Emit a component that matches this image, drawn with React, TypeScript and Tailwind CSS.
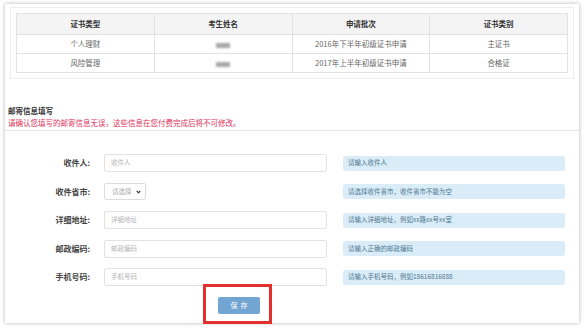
import React from 'react'

const font = { fontFamily: '"Noto Sans CJK SC", "Noto Sans", sans-serif' }

const certs = [
  { type: '个人理财', batch: '2016年下半年初级证书申请', kind: '主证书' },
  { type: '风险管理', batch: '2017年上半年初级证书申请', kind: '合格证' },
]

const fields = [
  { label: '收件人:', placeholder: '收件人', hint: '请输入收件人' },
  { label: '收件省市:', select: true, hint: '请选择收件省市，收件省市不能为空' },
  { label: '详细地址:', placeholder: '详细地址', hint: '请输入详细地址，例如xx路xx号xx室' },
  { label: '邮政编码:', placeholder: '邮政编码', hint: '请输入正确的邮政编码' },
  { label: '手机号码:', placeholder: '手机号码', hint: '请输入手机号码，例如18616816888' },
]

export default function App() {
  return (
    <div className="w-[583px] h-[334px] bg-white pt-[4px] pl-[5px] overflow-hidden" style={font}>
      <div className="w-[574px] h-[319px] bg-white shadow-[0_0_4px_rgba(0,0,0,0.3)]">
        {/* 证书列表 */}
        <div className="mx-[5px] pt-[3px]">
          <div className="border border-[#ececec] p-[5px]">
            <table className="w-full table-fixed border-collapse text-[7.5px] text-center">
              <thead>
                <tr className="h-[21px] bg-[#f4f4f4] text-[#333]">
                  <th className="border border-[#e2e2e2] font-semibold">证书类型</th>
                  <th className="border border-[#e2e2e2] font-semibold">考生姓名</th>
                  <th className="border border-[#e2e2e2] font-semibold">申请批次</th>
                  <th className="border border-[#e2e2e2] font-semibold">证书类别</th>
                </tr>
              </thead>
              <tbody className="text-[#666]">
                {certs.map((c) => (
                  <tr key={c.type} className="h-[19px]">
                    <td className="border border-[#e2e2e2]">{c.type}</td>
                    <td className="border border-[#e2e2e2]">
                      <span className="inline-block w-[14px] h-[5px] bg-[#a8a8a8] blur-[1px] align-middle" />
                    </td>
                    <td className="border border-[#e2e2e2]">{c.batch}</td>
                    <td className="border border-[#e2e2e2]">{c.kind}</td>
                  </tr>
                ))}
              </tbody>
            </table>
          </div>
        </div>

        {/* 邮寄信息 */}
        <div className="mt-[25px] px-[3px] text-[7.5px] leading-[13px] font-semibold text-[#333]">邮寄信息填写</div>
        <div className="px-[3px] text-[7.5px] leading-[12px] text-[#e0325a] border-b border-[#e4e4e4] pb-[1px]">
          请确认您填写的邮寄信息无误，这些信息在您付费完成后将不可修改。
        </div>

        <div className="mt-[23px] flex flex-col gap-[10.5px]">
          {fields.map((f) => (
            <div key={f.label} className="flex items-center h-[18px]">
              <div className="w-[85px] shrink-0 text-right text-[8px] font-semibold text-[#444]">{f.label}</div>
              <div className="ml-[14px] w-[223px] shrink-0">
                {f.select ? (
                  <div className="w-[42px] h-[17px] border border-[#ddd] rounded-[2px] flex items-center pl-[7px] gap-[4px] whitespace-nowrap text-[6.5px] text-[#aaa]">
                    请选择
                    <svg width="5" height="4" viewBox="0 0 6 5">
                      <path d="M0.8 1.2 L3 3.6 L5.2 1.2" stroke="#333" strokeWidth="1.4" fill="none" />
                    </svg>
                  </div>
                ) : (
                  <div className="h-[18px] border border-[#e2e2e2] rounded-[2px] flex items-center pl-[6px] text-[6.5px] text-[#b5b5b5]">
                    {f.placeholder}
                  </div>
                )}
              </div>
              <div className="ml-[16px] w-[222px] shrink-0 h-[15px] bg-[#d9ecf7] rounded-[3px] flex items-center pl-[5px] text-[6.5px] text-[#4f7891] whitespace-nowrap">
                {f.hint}
              </div>
            </div>
          ))}
        </div>

        <div className="mt-[11px] ml-[213px] relative w-[42px]">
          <button className="w-[42px] h-[17px] bg-[#73a5d2] rounded-[2px] text-white text-[7px] tracking-[3px] pl-[3px] flex items-center justify-center">
            保存
          </button>
          <div className="absolute -left-[15px] -right-[12px] -top-[13px] -bottom-[10px] border-[3px] border-[#e3302f]" />
        </div>
      </div>
    </div>
  )
}
